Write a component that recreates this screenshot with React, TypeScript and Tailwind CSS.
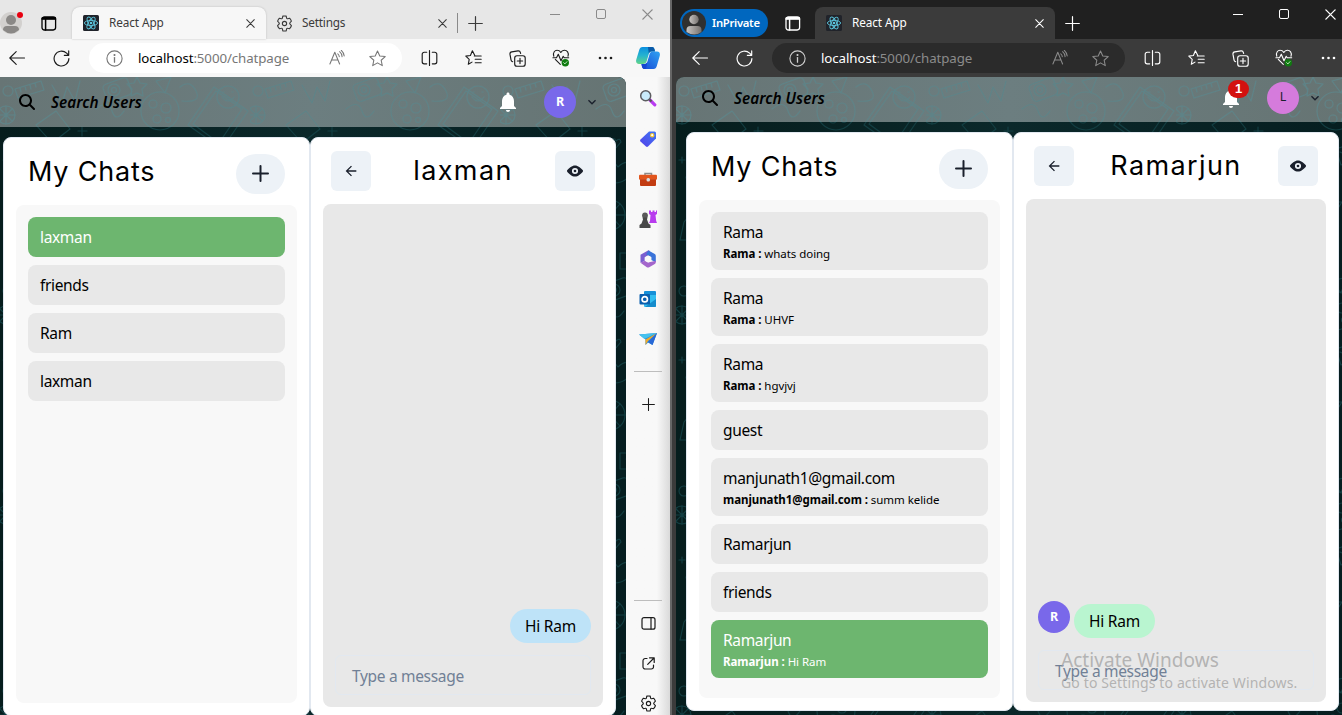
import React from "react";

type IconProps = { children: React.ReactNode; className?: string; box?: string; sw?: number };

function Line({ children, className = "size-4", box = "0 0 16 16", sw = 1 }: IconProps) {
  return (
    <svg viewBox={box} className={"shrink-0 " + className} fill="none" stroke="currentColor" strokeWidth={sw} strokeLinecap="round" strokeLinejoin="round">
      {children}
    </svg>
  );
}

function Solid({ children, className = "size-6", box = "0 0 24 24" }: IconProps) {
  return (
    <svg viewBox={box} className={"shrink-0 " + className} fill="currentColor">
      {children}
    </svg>
  );
}

const Slot = ({ className, children }: { className: string; children: React.ReactNode }) => (
  <div className={"flex shrink-0 items-center justify-center " + className}>{children}</div>
);

const CloseX = ({ className = "size-[9px]" }: { className?: string }) => (
  <Line className={className} box="0 0 10 10" sw={1.2}><path d="M.8.8l8.4 8.4M9.2.8L.8 9.2" /></Line>
);
const PlusThin = ({ className = "size-[15px]" }: { className?: string }) => (
  <Line className={className} box="0 0 15 15" sw={1.2}><path d="M7.5.7v13.6M.7 7.5h13.6" /></Line>
);
const Workspace = () => (
  <Line className="h-[15px] w-[16px]" box="0 0 16 15" sw={1.3}>
    <rect x="1" y="1" width="13.6" height="13" rx="2.4" />
    <path d="M1 3h13.6M4.6 4v10" strokeWidth="1.5" />
    <path d="M1.6 2.2h12.4" strokeWidth="2.2" />
  </Line>
);
const GEAR =
  "M8 .9c.6 0 1.1.1 1.6.2l.4 1.8c.1.4.6.7 1 .6l1.8-.5c.8.8 1.3 1.7 1.7 2.8L13.2 7.2c-.4.4-.4 1 0 1.4l1.3 1.5c-.4 1.1-.9 2-1.7 2.8L11 12.5c-.4-.1-.9.2-1 .6l-.4 1.8c-1 .2-2.2.2-3.2 0L6 13.1c-.1-.4-.6-.7-1-.6l-1.8.4c-.8-.8-1.3-1.7-1.7-2.8l1.3-1.4c.4-.4.4-1 0-1.4L1.5 5.8c.4-1.1.9-2 1.7-2.8l1.8.5c.4.1.9-.2 1-.6l.4-1.8C6.9 1 7.400.9 8 .9z";
const Gear = () => (
  <Line className="size-[17px]" sw={1.05}><path d={GEAR} /><circle cx="8" cy="8" r="2" /></Line>
);

function ReactLogo() {
  return (
    <svg viewBox="0 0 16 16" className="size-4 shrink-0">
      <rect width="16" height="16" rx="1.5" fill="#20232a" />
      <g fill="none" stroke="#5cc6dd" strokeWidth=".9">
        <ellipse cx="8" cy="8" rx="6.6" ry="2.6" />
        <ellipse cx="8" cy="8" rx="6.6" ry="2.6" transform="rotate(60 8 8)" />
        <ellipse cx="8" cy="8" rx="6.6" ry="2.6" transform="rotate(120 8 8)" />
      </g>
      <circle cx="8" cy="8" r="1.3" fill="#5cc6dd" />
    </svg>
  );
}

const BackArrow = () => (
  <Line className="h-[14px] w-4" box="0 0 16 14" sw={1.1}><path d="M.8 7h14.7M7.2.6L.8 7l6.4 6.4" /></Line>
);
const Refresh = () => (
  <Line className="size-[17px]" box="0 0 17 17" sw={1.15}><path d="M15.9 8.5a7.4 7.4 0 1 1-2.3-5.3l2 2M15.7.9v4.4h-4.4" /></Line>
);
const Info = () => (
  <Line className="size-[17px]" box="0 0 17 17" sw={1.1}><circle cx="8.5" cy="8.5" r="7.6" /><path d="M8.5 7.6v4.6" strokeWidth="1.3" /><circle cx="8.5" cy="5" r=".5" fill="currentColor" /></Line>
);
const ReadAloud = () => (
  <Line className="size-4" sw={1.05}><path d="M.9 14L5.8 2.2 10.6 14M2.6 10h6.3M8.8 3.8c.9.7 1.4 1.7 1.5 3M10.6 1.7c1.5 1.2 2.4 2.9 2.5 5M12.3.3c1.7 1.6 2.7 3.5 2.9 5.7" /></Line>
);
const STAR = "M8 .9l2.15 4.7 5.1.6-3.8 3.45 1.05 5.05L8 12.15 3.5 14.7l1.05-5.05L.75 6.2l5.1-.6z";
const Star = () => <Line className="size-[17px]" sw={1}><path d={STAR} /></Line>;
const Split = () => (
  <Line className="h-4 w-[17px]" box="0 0 17 16" sw={1.15}><path d="M5.7 2.2H3.2A2 2 0 0 0 1.2 4.2v7.6a2 2 0 0 0 2 2h2.5M11.3 2.2h2.5a2 2 0 0 1 2 2v7.6a2 2 0 0 1-2 2h-2.5M8.5.6v14.8" /></Line>
);
const Favorites = () => (
  <Line className="h-4 w-[17px]" box="0 0 17 16" sw={1.1}><path d="M9.8 5.4L7.400.8 5.4 5.5.8 6.1l3.4 3.2-.9 5L7 12.1M9.3 6h6.9M10.2 9.3h6M10.2 12.7h6" /></Line>
);
const Collections = () => (
  <Line className="size-[17px]" box="0 0 17 17" sw={1.15}><rect x="5.7" y="5.7" width="10.5" height="10.5" rx="2.3" /><path d="M11 8.3v5.3M8.3 11h5.3M3.7 11.7A2.3 2.3 0 0 1 2 9.8L1 4.4A2.2 2.2 0 0 1 2.8 1.9L9 .9a2.2 2.2 0 0 1 2.4 1.7l.2.9" /></Line>
);
const Health = () => (
  <Line className="size-[18px]" box="0 0 18 18" sw={1.1}>
    <path d="M1.8 7.3C.5 3.5 3 1 5.5 1.3c1.6.1 2.7 1 3.3 2.2C9.5 2.2 10.7 1.3 12.3 1.2c2.7-.1 4.9 2.6 3.7 6.1M3.3 10.3l5 5M.9 8.7h3.6l1.8-3.5 2.7 6.5 2.2-4.5 1 1.5h4.5" />
    <circle cx="13.3" cy="13.7" r="3.7" fill="#107c10" stroke="none" /><path d="M11.7 13.7l1.2 1.2 2-2.2" stroke="#d7f0d7" strokeWidth=".9" />
  </Line>
);
const Dots = () => (
  <Solid className="h-1 w-[15px]" box="0 0 15 4"><circle cx="2" cy="2" r="1.3" /><circle cx="7.5" cy="2" r="1.3" /><circle cx="13" cy="2" r="1.3" /></Solid>
);

function Copilot() {
  return (
    <svg viewBox="0 0 24 24" className="size-6">
      <defs>
        <linearGradient id="cpA" x1="0" y1="0" x2="0" y2="1"><stop stopColor="#0b8fe0" /><stop offset=".5" stopColor="#25b3cf" /><stop offset="1" stopColor="#62d488" /></linearGradient>
        <linearGradient id="cpB" x1="0" y1="1" x2="1" y2="0"><stop stopColor="#1747d6" /><stop offset="1" stopColor="#2fa4f2" /></linearGradient>
      </defs>
      <path d="M6.500 1H16c2 0 2.500 1.500 3 4.500h-3.200c-1.800 0-2.600 1-3.100 2.700l-1.900 6.600C10.200 17 9 18 7 18H3c-2.500 0-3.400-2-2.700-4.500L3.200 4C3.800 2 4.700 1 6.500 1z" fill="url(#cpA)" />
      <path d="M12 1h4c2 0 2.500 1.500 3 4.500h-3.200c-1.500 0-2.500.6-3 2.200z" fill="#0a5aa8" />
      <path d="M17.500 23H8.500c-2 0-2.500-1.500-3-5H8.500c1.500 0 2.500-1 3-2.700l1.900-6.600C14 6.500 15 5.500 17 5.500h4c2.500 0 3.400 2 2.700 4.500L20.800 20c-.6 2-1.500 3-3.300 3z" fill="url(#cpB)" />
      <path d="M10 23H8.500c-2 0-2.500-1.500-3-5H8.500c1.200 0 2.200-.6 2.700-2z" fill="#1546d1" />
    </svg>
  );
}

const S = ({ children }: { children: React.ReactNode }) => (
  <svg viewBox="0 0 18 18" className="size-[18px]">{children}</svg>
);
const sideApps: React.ReactNode[] = [
  <S key="s"><path d="M11 11l4.8 4.8" stroke="#b83bf0" strokeWidth="3.2" strokeLinecap="round" /><path d="M10.5 10.5l2 2" stroke="#555" strokeWidth="2" /><circle cx="6.7" cy="6.7" r="5" fill="#c9ebfb" stroke="#5c5c60" strokeWidth="1.5" /></S>,
  <S key="t"><defs><linearGradient id="tg" x1="1" y1="0" x2="0" y2="1"><stop stopColor="#3f78f5" /><stop offset="1" stopColor="#5340e8" /></linearGradient></defs><path d="M10 1.5h5.5A1.5 1.5 0 0 1 17 3v5.5L9 16.5q-1 .8-2 0l-5.500-5q-1-1 0-2z" fill="url(#tg)" /><circle cx="13.2" cy="5.2" r="1.7" fill="#fff" stroke="#f3c52f" strokeWidth="1.2" /></S>,
  <S key="b"><path d="M6 5V3.5h6.500V5" fill="none" stroke="#8b8b8b" strokeWidth="1.5" /><rect y="4.8" width="18" height="5" rx="1" fill="#e2551d" /><path d="M1 9.3h16V15q0 1-1 1H2q-1 0-1-1z" fill="#c23c12" /><rect x="7.5" y="8" width="3.5" height="3.5" rx="1.5" fill="#d9dde0" /></S>,
  <S key="c"><circle cx="6" cy="5.5" r="2.9" fill="#5a5a5a" /><path d="M3.5 7.500h5L8 9.500l1.500 4 2 1.500V18H.5v-3l2-1.500L4 9.500z" fill="#484848" /><path d="M10 .5h2V2h1.500V.5h2V2H17V.5h1V4l-1.500 1 .7 6 .8 2h-8l1-2 .5-6L10 4z" fill="#b83cee" /></S>,
  <S key="m">
    <path d="M9 .5L1.500 4.700v8L5.800 11V7.200L11 4.500V1.700Q10-.1 9 .5z" fill="#7a5ed0" />
    <path d="M9.500.5l6.300 3.600q1 .6 1 1.800v6.400L12.300 10V7L7 4.200z" fill="#3b74d9" />
    <path d="M1.500 12.700L6 10.700l3.200 1.800 7.600-1.700v1.400q0 1.200-1 1.800l-5.600 3.200q-1.200.7-2.400 0z" fill="#a466cc" />
    <path d="M9 5.500l3.200 1.800v3.500L9 12.600l-3.200-1.800V7.300z" fill="#f8f8f8" />
  </S>,
  <S key="o"><rect x="5" y="1" width="12" height="9" rx="1" fill="#1690d8" /><path d="M5 5h12v11a1 1 0 0 1-1 1H6q-1 0-1-1z" fill="#32bdf0" /><path d="M17 9v7q0 1-1 1H6z" fill="#168ccc" /><rect x=".5" y="4" width="10.5" height="10.5" rx="1" fill="#0a5fae" /><circle cx="5.75" cy="9.25" r="2.7" fill="none" stroke="#fff" strokeWidth="1.7" /></S>,
  <S key="p"><path d="M0 4.500L18 3 13.500 15 9 12.500 6.500 15V9.500z" fill="#2589d9" /><path d="M18 3L6.500 9.500V15L9 11z" fill="#f0a928" /><path d="M0 4.500L18 3 5.500 9z" fill="#45c2ee" /><path d="M18 3L9 12l4.500 3z" fill="#2868d7" /></S>,
];

function Doodles({ id, stroke }: { id: string; stroke: string }) {
  return (
    <svg className="absolute inset-0 size-full">
      <defs>
        <pattern id={id} width="250" height="200" patternUnits="userSpaceOnUse">
          <g fill="none" stroke={stroke} strokeWidth="1.1" strokeLinejoin="round" strokeLinecap="round">
            <path d="M15 12l26-8 3 9-26 8zM20 11l1 4M25 9l1 4M30 8l1 4M35 6l1 4" />
            <circle cx="8" cy="14" r="5" /><circle cx="6" cy="38" r="9" /><path d="M6 29v18M-3 38h18M0 32l12 12M12 32L0 44" />
            <path d="M52 8l10 18 5-16 8 14 5-20M36 48l20-14 14 18-18 14z" />
            <rect x="104" y="4" width="26" height="18" rx="4" transform="rotate(-20 116 12)" /><circle cx="114" cy="13" r="6" /><circle cx="114" cy="13" r="2.5" />
            <path d="M137 0l3 6 7 1-5 5 1 7-6-3-6 3 1-7-5-5 7-1z" /><path d="M156 4l15-4-6 16zM180 10q10-8 16 4t-14 10M96 32q12-10 16 2t12 0" />
            <circle cx="160" cy="34" r="19" /><circle cx="153" cy="27" r="4" /><circle cx="166" cy="31" r="5" /><circle cx="157" cy="42" r="4" /><circle cx="168" cy="43" r="2.5" />
            <path d="M188 48l26-38 34 24-26 38zM193 47l23-33 26 18-23 34z" /><circle cx="228" cy="20" r="11" /><path d="M222 20q6 8 12 0M223 15h1M232 15h1" />
            <path d="M20 72q6-12 14 0t14-3v13q-15 12-28 0zM68 70l9-4 4 8 8-3-2 10-11 4zM10 100l22-6 6 24-22 6zM15 105l14-4M17 110l14-4" />
            <path d="M56 92q12-12 24 0t-4 20l-10 8v-10q-14-2-10-18zM62 96q4-3 6 2M72 96q4-3 6 2M96 84q14-6 22 6 8-8 16-2-4 18-20 18t-18-22z" />
            <path d="M110 64q4-5 6 0 4-4 5 1l-6 7zM140 78v22m-6-4q6 8 12 0M136 82h8M160 72l20-7 5 16-20 7zM164 75l9 4 5-10" />
            <circle cx="208" cy="96" r="14" /><path d="M202 90l4 4m8-4l-4 4M200 102q8 6 15-2M230 84q12 2 6 14t-12 4q-8-12 6-18z" />
            <path d="M8 145q12-16 24 0l4 18H4zM14 145v14M22 142v16M50 138l28-12 6 14-28 12zM56 140l22-9M60 146l22-9" />
            <circle cx="110" cy="138" r="15" /><path d="M95 138h30M110 123v30M100 127l20 22M120 127l-20 22M140 125l12 22 14-22zM146 130h14" />
            <path d="M182 128q14-14 24 2t-8 20-20-6zM188 134q8-6 12 2M220 130l22 8-8 22-22-8zM30 182q14-14 28 0t-12 14M78 172l6 10 12-4-4 14M120 176h22v16h-22zM126 182h10M170 176l5 7 8-5-3 10M212 178q6-9 11 0 8-6 9 3l-12 12z" />
            <path d="M82 50v9m-4-5h9M92 112l4-4M132 112q5-5 8 0M180 112v8m-4-4h8M6 80v6m-3-3h6" />
          </g>
        </pattern>
      </defs>
      <rect width="100%" height="100%" fill={`url(#${id})`} />
    </svg>
  );
}

type Chat = { name: string; from?: string; text?: string };

type AppProps = {
  id: string;
  initial: string;
  initialBg: string;
  badge?: boolean;
  chats: Chat[];
  active: number;
  title: string;
  children: React.ReactNode;
  layout: "left" | "right";
};

function ChatApp({ id, initial, initialBg, badge, chats, active, title, children, layout }: AppProps) {
  const left = layout === "left";
  return (
    <div className={"relative isolate flex flex-col overflow-hidden bg-gradient-to-r from-[#061d1d] via-[#0b282a] to-[#061e20] " + (left ? "w-[626px] rounded-tr-lg" : "w-[666px] rounded-tl-lg")}>
      <div className="absolute inset-0 -z-10"><Doodles id={id} stroke="#123e42" /></div>
      <header className={"relative flex w-full shrink-0 items-center overflow-visible bg-gradient-to-r from-[#677575] via-[#6c7e80] to-[#667473] " + (left ? "h-[50px]" : "h-[45px]")}>
        <div className="absolute inset-0 -z-0"><Doodles id={id + "n"} stroke="#5e8387" /></div>
        <div className={"relative flex grow items-center text-black " + (left ? "pl-[19px]" : "pl-[26px] pb-1")}>
          <Solid className="size-4" box="0 0 512 512"><path d="M416 208c0 45.900-14.900 88.300-40 122.700L502.600 457.400c12.500 12.500 12.500 32.800 0 45.300s-32.800 12.500-45.300 0L330.700 376c-34.400 25.200-76.800 40-122.700 40C93.100 416 0 322.900 0 208S93.100 0 208 0S416 93.100 416 208zM208 352a144 144 0 1 0 0-288 144 144 0 1 0 0 288z" /></Solid>
          <span className="ml-4 text-[15.3px] font-semibold italic leading-6 tracking-[0.03px]">Search Users</span>
        </div>
        <div className={"relative flex items-center " + (left ? "pr-[26px]" : "pr-[19px] pb-1")}>
          <div className="relative mr-6 flex text-white">
            <Solid className="size-6"><path d="M12 22c1.100 0 2-.9 2-2h-4c0 1.100.89 2 2 2zm6-6v-5c0-3.070-1.640-5.640-4.500-6.320V4c0-.83-.67-1.500-1.500-1.500s-1.500.67-1.500 1.500v.68C7.630 5.360 6 7.920 6 11v5l-2 2v1h16v-1l-2-2z" /></Solid>
            {badge && <span className="absolute -top-[6px] left-[9px] flex h-[18px] w-[21px] items-center justify-center rounded-full bg-[#d3110f] font-['Liberation_Sans'] text-[13px] font-bold text-white">1</span>}
          </div>
          <Slot className={"size-8 rounded-full text-[12.5px] " + initialBg}>{initial}</Slot>
          <Solid className="ml-2 size-4 text-[#1a202c]"><path d="M16.590 8.590L12 13.170 7.410 8.590 6 10l6 6 6-6z" /></Solid>
        </div>
      </header>
      <main className={"mt-[10px] flex h-[579px] shrink-0 " + (left ? "ml-[3px] w-[613px]" : "ml-[10px] w-[653px]")}>
        <section className={"flex flex-col rounded-lg border border-[#e2e8f0] bg-white px-3 pb-3 " + (left ? "w-[307px]" : "w-[327px]")}>
          <div className="flex h-[67px] items-center justify-between px-3 pt-1">
            <h1 className="pb-[3px] font-[Inter] text-[27px] leading-9 tracking-[0.8px] text-black">My Chats</h1>
            <Slot className="h-10 w-[49px] rounded-full bg-[#edf2f7] text-[#1a202c]">
              <Line className="size-[17px]" box="0 0 17 17" sw={2}><path d="M8.5 1v15M1 8.500h15" /></Line>
            </Slot>
          </div>
          <div className="flex grow flex-col gap-2 rounded-lg bg-[#f8f8f8] p-3">
            {chats.map((c, i) => (
              <div key={i} className={"flex shrink-0 flex-col rounded-lg px-3 pt-2 " + (c.text ? "h-[58px] " : "h-10 ") + (i === active ? "bg-[#6db66f] text-white" : "bg-[#e8e8e8] text-black")}>
                <p className="text-[15.5px] leading-[25px] tracking-[-0.34px]">{c.name}</p>
                {c.text && <p className="text-[11.5px] leading-[18px] tracking-[-0.06px]"><b>{c.from} : </b>{c.text}</p>}
              </div>
            ))}
          </div>
        </section>
        <section className={"flex flex-col rounded-lg border border-[#e2e8f0] bg-white px-3 pb-2 " + (left ? "w-[306px]" : "w-[326px]")}>
          <div className="flex h-[66px] items-center justify-between px-2">
            <Slot className="size-10 rounded-md bg-[#edf2f7] text-[#1a202c]">
              <Solid className="size-4"><path d="M20 11H7.830l5.590-5.590L12 4l-8 8 8 8 1.410-1.410L7.830 13H20v-2z" /></Solid>
            </Slot>
            <h2 className="font-[Inter] text-[27px] leading-9 tracking-[1.4px] text-black">{title}</h2>
            <Slot className="size-10 rounded-md bg-[#edf2f7] text-[#1a202c]">
              <Solid className="size-4"><path d="M23.432,10.524C20.787,7.614,16.4,3.538,12,3.6,7.6,3.537,3.213,7.614.568,10.524a2.211,2.211,0,0,0,0,2.948C3.182,16.351,7.507,20.4,11.845,20.4h.308c4.347,0,8.671-4.049,11.288-6.929A2.21,2.21,0,0,0,23.432,10.524ZM7.4,12A4.6,4.6,0,1,1,12,16.6,4.6,4.6,0,0,1,7.4,12Z" /><circle cx="12" cy="12" r="2" /></Solid>
            </Slot>
          </div>
          <div className="flex grow flex-col justify-end rounded-lg bg-[#e8e8e8] p-3">
            {children}
            <div className="mt-3 flex h-10 items-center rounded-md border border-[#e2e8f0] px-4 pt-1 text-[15.5px] tracking-[-0.32px] text-[#718096]">Type a message</div>
          </div>
        </section>
      </main>
    </div>
  );
}

function LeftWindow() {
  return (
    <div className="flex w-[670px] flex-col bg-[#f7f7f7]">
      <div className="flex h-[39px] shrink-0 bg-[#e7e7e7] text-[#3b3b3b]">
        <div className="relative mt-3 h-[22px] w-[22px] shrink-0">
          <svg viewBox="0 0 22 22" className="size-[22px]"><circle cx="11" cy="11" r="11" fill="#d2d0ce" /><circle cx="11" cy="8" r="5" fill="#8a8886" /><path d="M3 18q0-4 4-4h8q4 0 4 4-8 7-16 0z" fill="#8a8886" /></svg>
          <span className="absolute top-0 left-[17px] size-[6px] rounded-full bg-[#e80010]" />
        </div>
        <Slot className="w-[50px] pl-[4px] pt-[7px] text-black"><Workspace /></Slot>
        <div className="mt-[7px] flex h-8 w-[194px] shrink-0 items-center rounded-t-lg bg-[#f7f7f7] px-[11px] shadow-[0_0_2px_#b5b5b5]">
          <ReactLogo />
          <span className="ml-[10px] grow text-[11.8px] tracking-[-0.1px]">React App</span>
          <CloseX />
        </div>
        <div className="mt-[7px] flex h-8 w-[191px] shrink-0 items-center px-[10px]">
          <Gear />
          <span className="ml-[9px] grow text-[11.8px] tracking-[-0.2px]">Settings</span>
          <CloseX />
        </div>
        <div className="mt-[13px] h-5 w-px shrink-0 bg-[#8a8a8a]" />
        <Slot className="ml-[10px] w-[15px] pt-[7px]"><PlusThin /></Slot>
        <div className="ml-[49px] flex h-7 grow items-center text-[#8a8a8a]">
          <Slot className="w-[46px]"><div className="h-px w-[10px] bg-[#8a8a8a]" /></Slot>
          <Slot className="w-[46px]"><div className="size-[10px] rounded-[2px] border border-[#8a8a8a]" /></Slot>
          <Slot className="w-[46px]"><CloseX className="size-[11px]" /></Slot>
        </div>
      </div>
      <div className="flex h-[38px] shrink-0 items-center text-[#1b1b1b]">
        <Slot className="w-[34px]"><BackArrow /></Slot>
        <Slot className="ml-[5px] w-11"><Refresh /></Slot>
        <div className="ml-[6px] mr-[5px] flex h-[30px] w-[313px] shrink-0 items-center rounded-full bg-white pl-[17px] pr-4 text-[#767676]">
          <Info />
          <span className="ml-[15px] grow pt-px text-[13.3px] tracking-[-0.09px] text-[#767676]"><span className="text-black">localhost</span>:5000/chatpage</span>
          <ReadAloud />
          <div className="ml-6 flex"><Star /></div>
        </div>
        <Slot className="w-11"><Split /></Slot>
        <Slot className="w-11"><Favorites /></Slot>
        <Slot className="w-11"><Collections /></Slot>
        <Slot className="w-11"><Health /></Slot>
        <Slot className="w-11"><Dots /></Slot>
        <Slot className="w-[42px]"><Copilot /></Slot>
      </div>
      <div className="flex grow overflow-hidden">
        <ChatApp
          id="wl" layout="left" initial="R" initialBg="bg-[#7968ea] font-bold text-white"
          chats={[{ name: "laxman" }, { name: "friends" }, { name: "Ram" }, { name: "laxman" }]}
          active={0} title="laxman"
        >
          <div className="flex h-[34px] w-[81px] items-center justify-center self-end rounded-[17px] bg-[#bee3f8] pt-[2px] text-[15.5px] tracking-[-0.2px] text-black">Hi Ram</div>
        </ChatApp>
        <aside className="flex w-11 flex-col items-center bg-gradient-to-r from-[#f8f8f8] from-70% to-[#dadada] text-[#1b1b1b]">
          {sideApps.map((a, i) => <Slot key={i} className={i === 0 ? "h-[42px] w-11" : "h-10 w-11"}>{a}</Slot>)}
          <div className="mt-3 h-px w-7 shrink-0 bg-[#bdbdbd]" />
          <Slot className="mt-[22px] h-5 w-11"><PlusThin className="size-[13px]" /></Slot>
          <div className="mt-[186px] h-px w-7 shrink-0 bg-[#bdbdbd]" />
          <Slot className="mt-[2px] h-10"><Line className="size-[15px]" box="0 0 15 15" sw={1.2}><rect x="1" y="1.7" width="13" height="11.5" rx="2" /><path d="M10 2v11" /></Line></Slot>
          <Slot className="h-10"><Line className="size-[13px]" box="0 0 13 13" sw={1.2}><path d="M5 1.500H3.200A2.200 2.200 0 0 0 1 3.700v6A2.200 2.200 0 0 0 3.200 12h6a2.200 2.200 0 0 0 2.300-2.300V8M7.500.8h4.700v4.700M12 1L5.700 7.300" /></Line></Slot>
          <Slot className="h-10"><Gear /></Slot>
        </aside>
      </div>
    </div>
  );
}

const rightChats: Chat[] = [
  { name: "Rama", from: "Rama", text: "whats doing" },
  { name: "Rama", from: "Rama", text: "UHVF" },
  { name: "Rama", from: "Rama", text: "hgvjvj" },
  { name: "guest" },
  { name: "manjunath1@gmail.com", from: "manjunath1@gmail.com", text: "summ kelide" },
  { name: "Ramarjun" },
  { name: "friends" },
  { name: "Ramarjun", from: "Ramarjun", text: "Hi Ram" },
];

function RightWindow() {
  return (
    <div className="flex w-[670px] shrink-0 flex-col bg-[#3b3b3b] text-white">
      <div className="flex h-[39px] shrink-0 bg-[#202020]">
        <div className="ml-2 mt-[9px] flex h-7 w-[88px] shrink-0 items-center rounded-full bg-[#0067bf] pl-[2px]">
          <svg viewBox="0 0 24 24" className="size-6 shrink-0"><defs><linearGradient id="ip"><stop stopColor="#c8c5c2" /><stop offset="1" stopColor="#75716e" /></linearGradient></defs><circle cx="12" cy="12" r="12" fill="#30302f" /><circle cx="12" cy="8.5" r="4.7" fill="url(#ip)" /><path d="M4.500 21v-2q0-4 4-4h7q4 0 4 4v2q-7 5-15 0z" fill="url(#ip)" /></svg>
          <span className="ml-[6px] text-[11.3px] font-semibold tracking-[-0.3px]">InPrivate</span>
        </div>
        <Slot className="w-[47px] pl-[2px] pt-[7px]"><Workspace /></Slot>
        <div className="mt-[7px] flex h-8 w-[240px] shrink-0 items-center rounded-t-lg bg-[#3b3b3b] px-[11px]">
          <ReactLogo />
          <span className="ml-[10px] grow text-[11.8px] tracking-[-0.1px]">React App</span>
          <CloseX />
        </div>
        <Slot className="ml-[10px] w-[15px] pt-[7px]"><PlusThin /></Slot>
        <div className="ml-[135px] flex h-7 shrink-0 items-center">
          <Slot className="w-[46px]"><div className="h-px w-[10px] bg-white" /></Slot>
          <Slot className="w-[46px]"><div className="size-[10px] rounded-[2px] border border-white" /></Slot>
          <Slot className="w-[46px]"><CloseX className="size-[11px]" /></Slot>
        </div>
      </div>
      <div className="flex h-[38px] shrink-0 items-center">
        <Slot className="ml-[6px] w-11"><BackArrow /></Slot>
        <Slot className="w-11"><Refresh /></Slot>
        <div className="ml-[6px] mr-[5px] flex h-[30px] w-[353px] shrink-0 items-center rounded-full bg-[#2b2b2b] pl-[17px] pr-4 text-[#8b8b8b]">
          <span className="text-[#d0d0d0]"><Info /></span>
          <span className="ml-[15px] grow pt-px text-[13.3px] tracking-[-0.09px]"><span className="text-white">localhost</span>:5000/chatpage</span>
          <ReadAloud />
          <div className="ml-6 flex"><Star /></div>
        </div>
        <Slot className="w-11"><Split /></Slot>
        <Slot className="w-11"><Favorites /></Slot>
        <Slot className="w-11"><Collections /></Slot>
        <Slot className="w-11"><Health /></Slot>
        <Slot className="w-11"><Dots /></Slot>
      </div>
      <div className="flex grow overflow-hidden pl-1">
        <ChatApp
          id="wr" layout="right" initial="L" initialBg="bg-[#d57bdc] font-normal text-[#1a202c]" badge
          chats={rightChats} active={7} title="Ramarjun"
        >
          <div className="flex h-[37px] items-start gap-1">
            <Slot className="size-8 rounded-full bg-[#7968ea] text-[12.5px] font-bold text-white">R</Slot>
            <div className="mt-[3px] flex h-[34px] w-[81px] items-center justify-center rounded-[17px] bg-[#b9f5d0] pt-[2px] text-[15.5px] tracking-[-0.2px] text-black">Hi Ram</div>
          </div>
        </ChatApp>
      </div>
    </div>
  );
}

export default function App() {
  return (
    <div className="relative flex h-[715px] w-[1342px] overflow-hidden bg-[#555] font-['Noto_Sans','Open_Sans',sans-serif]">
      <LeftWindow />
      <div className="w-[2px] shrink-0 bg-[#666]" />
      <RightWindow />
      <div className="absolute left-[1061px] top-[648px] whitespace-nowrap text-[#a5a5a5]/80">
        <p className="text-[19px] leading-6 tracking-[0.05px]">Activate Windows</p>
        <p className="text-[14px] leading-[21px] tracking-[0.13px]">Go to Settings to activate Windows.</p>
      </div>
    </div>
  );
}
